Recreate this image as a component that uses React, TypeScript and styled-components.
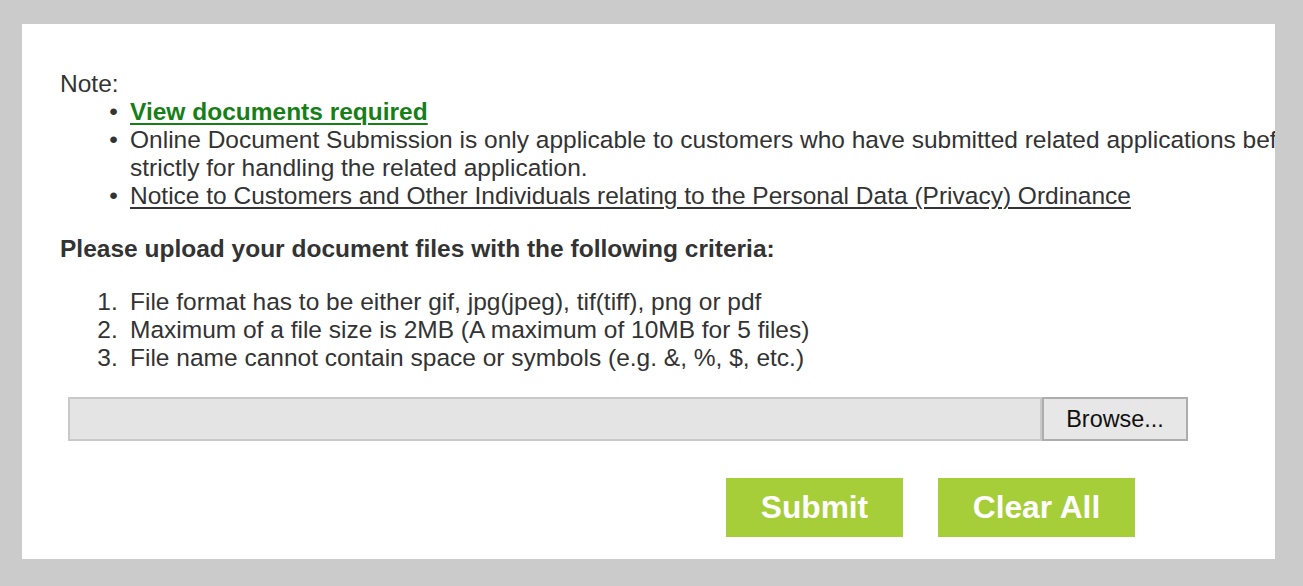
import styled, { createGlobalStyle } from "styled-components";

const GlobalStyle = createGlobalStyle`
  html, body {
    margin: 0;
    padding: 0;
    background: #cbcbcb;
  }
  body {
    font-family: "Liberation Sans", Arial, sans-serif;
  }
`;

const Page = styled.div`
  width: 1303px;
  height: 586px;
  padding: 24px 28px 27px 22px;
  box-sizing: border-box;
  background: #cbcbcb;
`;

const Panel = styled.div`
  height: 535px;
  background: #fff;
  overflow: hidden;
  padding: 46px 0 22px 38px;
  box-sizing: border-box;
  color: #333;
  font-size: 24.5px;
  line-height: 28px;
`;

const NoteLabel = styled.div``;

const BulletList = styled.ul`
  margin: 0;
  padding-left: 70px;
`;

const Item = styled.li`
  white-space: nowrap;

  &::marker {
    content: "•\\2002";
    color: #333;
  }
`;

const GreenLink = styled.a`
  color: #177f17;
  font-weight: bold;
  text-decoration: underline;
  text-decoration-thickness: 2px;
  text-underline-offset: 3px;
`;

const PlainLink = styled.a`
  color: #333;
  text-decoration: underline;
  text-decoration-thickness: 2px;
  text-underline-offset: 3px;
`;

const Heading = styled.div`
  margin-top: 25px;
  font-weight: bold;
`;

const Criteria = styled.ol`
  margin: 25px 0 0;
  padding-left: 70px;

  li::marker {
    content: counter(list-item) ".\\2002";
  }
`;

const FileRow = styled.div`
  display: flex;
  width: 1120px;
  height: 44px;
  margin: 25px 0 0 8px;
`;

const FileName = styled.div`
  flex: 1;
  background: #e4e4e4;
  border: 2px solid #c9c9c9;
  box-sizing: border-box;
`;

const BrowseButton = styled.button`
  width: 146px;
  height: 44px;
  background: #e7e7e7;
  border: 2px solid #adadad;
  box-sizing: border-box;
  font-family: "Liberation Sans", Arial, sans-serif;
  font-size: 23.4px;
  color: #111;
  padding: 0;
`;

const Actions = styled.div`
  display: flex;
  justify-content: flex-end;
  gap: 35px;
  width: 1120px;
  margin: 37px 0 0 8px;
  padding-right: 53px;
  box-sizing: border-box;
`;

const ActionButton = styled.button<{ $w: number }>`
  width: ${(p) => p.$w}px;
  height: 59px;
  background: #a6ce38;
  border: none;
  color: #fff;
  font-family: "Liberation Sans", Arial, sans-serif;
  font-weight: bold;
  font-size: 31.7px;
  padding: 0;
`;

function App() {
  return (
    <>
      <GlobalStyle />
      <Page>
        <Panel>
          <NoteLabel>Note:</NoteLabel>
          <BulletList>
            <Item>
              <GreenLink href="#">View documents required</GreenLink>
            </Item>
            <Item>
              Online Document Submission is only applicable to customers who
              have submitted related applications before. The documents will be used
              <br />
              strictly for handling the related application.
            </Item>
            <Item>
              <PlainLink href="#">
                Notice to Customers and Other Individuals relating to the
                Personal Data (Privacy) Ordinance
              </PlainLink>
            </Item>
          </BulletList>
          <Heading>
            Please upload your document files with the following criteria:
          </Heading>
          <Criteria>
            <li>File format has to be either gif, jpg(jpeg), tif(tiff), png or pdf</li>
            <li>Maximum of a file size is 2MB (A maximum of 10MB for 5 files)</li>
            <li>File name cannot contain space or symbols (e.g. &amp;, %, $, etc.)</li>
          </Criteria>
          <FileRow>
            <FileName />
            <BrowseButton type="button">Browse...</BrowseButton>
          </FileRow>
          <Actions>
            <ActionButton $w={177}>Submit</ActionButton>
            <ActionButton $w={197}>Clear All</ActionButton>
          </Actions>
        </Panel>
      </Page>
    </>
  );
}

export default App;
